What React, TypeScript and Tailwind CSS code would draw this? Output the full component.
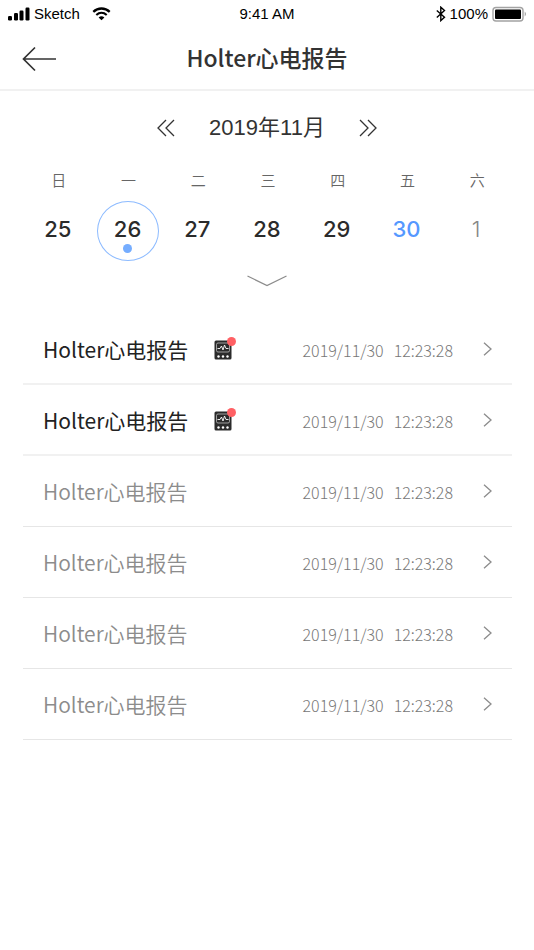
const week = ['日', '一', '二', '三', '四', '五', '六'];

const days = [
  { label: '25', tone: 'font-medium text-[#2b2b2b]' },
  { label: '26', tone: 'font-medium text-[#2b2b2b]', selected: true },
  { label: '27', tone: 'font-medium text-[#2b2b2b]' },
  { label: '28', tone: 'font-medium text-[#2b2b2b]' },
  { label: '29', tone: 'font-medium text-[#2b2b2b]' },
  { label: '30', tone: 'font-medium text-[#5598ff]' },
  { label: '1', tone: 'font-light text-[#888888]' },
];

const reports = [
  { id: 1, unread: true },
  { id: 2, unread: true },
  { id: 3, unread: false },
  { id: 4, unread: false },
  { id: 5, unread: false },
  { id: 6, unread: false },
];

function StatusBar() {
  return (
    <div className="grid h-7 grid-cols-3 items-center px-[7px] font-['Liberation_Sans',sans-serif] text-[15px] leading-5 text-black">
      <div className="flex items-center">
        <svg width="23" height="14" viewBox="0 0 23 14" aria-hidden="true">
          <rect x="1" y="9" width="4" height="4.500" rx="1.200" />
          <rect x="7" y="6" width="4" height="7.500" rx="1.200" />
          <rect x="12.500" y="3.500" width="4" height="10" rx="1.200" />
          <rect x="18.500" y="0.500" width="4" height="13" rx="1.200" />
        </svg>
        <span className="ml-1">Sketch</span>
        <svg className="ml-3" width="19" height="14" viewBox="0 0 19 14" aria-hidden="true">
          <path d="M1.300 4.800C6 .4 13 .4 17.700 4.800" fill="none" stroke="#000" strokeWidth="2.300" />
          <path d="M4.300 8C7.400 5.200 11.600 5.200 14.700 8" fill="none" stroke="#000" strokeWidth="2.100" />
          <path d="M6.600 10.400Q9.500 8 12.400 10.400L9.500 13.300Z" />
        </svg>
      </div>
      <span className="text-center">9:41 AM</span>
      <div className="flex items-center justify-end">
        <svg width="10" height="16" viewBox="0 0 10 16" aria-hidden="true">
          <path d="M.8 4.500L8.500 11.200L4.800 14.600V1.200L8.500 4.600L.8 11.400" fill="none" stroke="#000" strokeWidth="1.400" />
        </svg>
        <span className="ml-1">100%</span>
        <svg className="ml-1" width="35" height="16" viewBox="0 0 35 16" aria-hidden="true">
          <rect x="1" y="1.500" width="30" height="13.500" rx="3" fill="none" stroke="#a3a3a3" strokeWidth="1.400" />
          <rect x="3" y="3.500" width="26" height="9.500" rx="1" />
          <path d="M32.700 5.500q2.600 2.500 0 5z" fill="#a3a3a3" />
        </svg>
      </div>
    </div>
  );
}

function Header() {
  return (
    <header className="grid h-[63px] grid-cols-[1fr_auto_1fr] items-center border-b-2 border-[#f1f1f1] px-[22px]">
      <button type="button" aria-label="返回" className="w-9">
        <svg width="36" height="26" viewBox="0 0 36 26" fill="none" stroke="#333" strokeWidth="1.700">
          <path d="M34 13H1.500M13 1.500L1.500 13L13 24.500" />
        </svg>
      </button>
      <h1 className="pb-1 text-[23px] font-medium leading-8 text-[#333]">Holter心电报告</h1>
    </header>
  );
}

function Calendar() {
  return (
    <section>
      <div className="flex h-[74px] items-center justify-center">
        <button type="button" aria-label="上个月">
          <svg width="18" height="18" viewBox="0 0 18 18" fill="none" stroke="#333" strokeWidth="1.300">
            <path d="M9 1L1 9L9 17M17 1L9 9L17 17" />
          </svg>
        </button>
        <h2 className="mx-[34px] font-['Liberation_Sans','Noto_Sans_CJK_SC',sans-serif] text-[22px] leading-8 text-[#333]">
          2019年11月
        </h2>
        <button type="button" aria-label="下个月">
          <svg width="18" height="18" viewBox="0 0 18 18" fill="none" stroke="#333" strokeWidth="1.300">
            <path d="M1 1L9 9L1 17M9 1L17 9L9 17" />
          </svg>
        </button>
      </div>
      <div className="grid grid-cols-7 pl-6 pr-[22px]">
        {week.map((d) => (
          <span key={d} className="text-center text-[15px] font-[350] leading-[30px] text-[#666]">
            {d}
          </span>
        ))}
      </div>
      <div className="mt-[6px] grid grid-cols-7 justify-items-center px-[23px]">
        {days.map((d) => (
          <button
            key={d.label}
            type="button"
            aria-pressed={!!d.selected}
            className={`flex h-[60px] w-[62px] flex-col items-center rounded-[50%] border pt-3 font-['Inter',sans-serif] text-[22px] leading-[30px] ${d.tone} ${
              d.selected ? 'border-[#8dbbff]' : 'border-transparent'
            }`}
          >
            {d.label}
            {d.selected && <span className="h-[9px] w-[9px] rounded-full bg-[#75adff]" />}
          </button>
        ))}
      </div>
      <button type="button" aria-label="展开日历" className="mx-auto flex h-[39px] items-center justify-center">
        <svg width="40" height="12" viewBox="0 0 40 12" fill="none" stroke="#8c8c8c" strokeWidth="1.300">
          <path d="M.5 1L20 10.500L39.500 1" />
        </svg>
      </button>
    </section>
  );
}

function MonitorIcon() {
  return (
    <span className="relative mt-[3px]" role="img" aria-label="未读">
      <svg className="block" width="18" height="20" viewBox="0 0 18 20">
        <rect x="0.500" y="0.500" width="17" height="19" rx="1.500" fill="#2b2b2b" />
        <rect x="2.500" y="3" width="13" height="9" rx="1.500" fill="none" stroke="#bdbdbd" strokeWidth="0.800" />
        <path d="M3.500 8.500H6L7.500 6L9 10L10.500 5L12 8.500H14.500" fill="none" stroke="#fff" strokeWidth="0.900" />
        <circle cx="4.500" cy="16.500" r="1.200" fill="#fff" />
        <circle cx="9" cy="16.500" r="1.200" fill="#fff" />
        <circle cx="13.500" cy="16.500" r="1.200" fill="#fff" />
      </svg>
      <span className="absolute -right-1 -top-[3px] h-[9px] w-[9px] rounded-full bg-[#ff6064]" />
    </span>
  );
}

function ReportRow({ unread }: { unread: boolean }) {
  return (
    <li className={unread ? 'border-b-2 border-[#f1f1f1]' : 'border-b border-[#e6e6e6]'}>
      <a href="#report" className={`flex items-center px-5 ${unread ? 'h-[69px]' : 'h-[70px]'}`}>
        <span className={`mr-[26px] text-[21px] leading-8 ${unread ? 'font-normal text-[#222]' : 'font-[350] text-[#8c8c8c]'}`}>
          Holter心电报告
        </span>
        {unread && <MonitorIcon />}
        <time className="ml-auto mr-[30px] flex gap-[10px] pt-[2px] text-[16px] font-light leading-6 text-[#777]">
          <span>2019/11/30</span>
          <span>12:23:28</span>
        </time>
        <svg width="9" height="14" viewBox="0 0 9 14" fill="none" stroke="#8c8c8c" strokeWidth="1.300" aria-hidden="true">
          <path d="M1 .8L8 7L1 13.200" />
        </svg>
      </a>
    </li>
  );
}

export default function App() {
  return (
    <div className="min-h-screen bg-white font-['Noto_Sans_CJK_SC',sans-serif]">
      <StatusBar />
      <Header />
      <main>
        <Calendar />
        <ul className="mt-[14px] pl-[23px] pr-[22px]">
          {reports.map((r) => (
            <ReportRow key={r.id} unread={r.unread} />
          ))}
        </ul>
      </main>
    </div>
  );
}
